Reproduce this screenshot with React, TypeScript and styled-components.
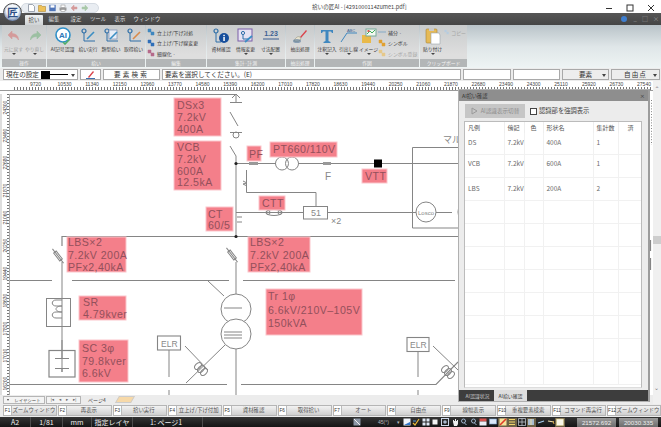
import React from "react";
import styled, { createGlobalStyle } from "styled-components";

const Global = createGlobalStyle`
  html, body { margin: 0; padding: 0; background: #fff; }
  * { box-sizing: border-box; }
  #root { width: 661px; height: 427px; }
`;
const JP = `"Noto Sans CJK JP", "Liberation Sans", sans-serif`;

const Root = styled.div`
  position: relative; width: 661px; height: 427px; overflow: hidden;
  display: flex; flex-direction: column; font-family: ${JP}; background: #f0f0f0;
`;
const TitleBar = styled.div`
  height: 13px; background: #fff; display: flex; align-items: center; position: relative;
  padding: 2px 0 0 21px;
`;
const Quick = styled.div`
  width: 78px; height: 10px; border-radius: 5px; background: #e9edf2; border: 1px solid #d5dbe2;
  display: flex; align-items: center; gap: 3px; padding-left: 6px;
`;
const TitleText = styled.div`
  position: absolute; left: 312px; top: 3px; font-size: 5.6px; line-height: 8px; color: #444; white-space: nowrap;
`;
const WinButtons = styled.div`
  position: absolute; right: 0; top: 0; height: 16px; display: flex; align-items: center;
`;
const WinBtn = styled.div`
  width: 21px; display: flex; justify-content: center; align-items: center; color: #333;
`;
const Logo = styled.div`
  position: absolute; left: 3px; top: 3px; width: 19px; height: 19px; border-radius: 50%;
  background: radial-gradient(circle at 50% 40%, #f4f7fb 0 45%, #6c82a8 75%, #3d4760 100%);
  border: 1px solid #4e4e4e; display: flex; align-items: center; justify-content: center;
  font-size: 11px; line-height: 1; font-weight: 700; color: #2f4f86; z-index: 3;
`;
const TabBar = styled.div`
  height: 12px; background: linear-gradient(#565656, #454545); display: flex; align-items: flex-end;
  padding-left: 25px; position: relative;
`;
const Tab = styled.div<{ $w: number; $active?: boolean }>`
  width: ${p => p.$w}px; height: ${p => (p.$active ? 10 : 12)}px; font-size: 5.4px; line-height: ${p => (p.$active ? 10 : 12)}px;
  text-align: center; color: ${p => (p.$active ? "#444" : "#ddd")};
  background: ${p => (p.$active ? "linear-gradient(#eef1f2,#cfd3d5)" : "transparent")};
  border-radius: 1px 1px 0 0;
`;
const TabRight = styled.div`
  position: absolute; right: 2px; top: 2px; display: flex; align-items: center; gap: 5px;
  color: #9a9a9a; font-size: 6px; line-height: 8px;
`;
const HelpDot = styled.span`
  width: 6px; height: 6px; border-radius: 50%; background: #3f7fd0; margin-right: 2px;
`;
const Ribbon = styled.div`
  height: 43px; display: flex; padding: 0 0 1px 2px; gap: 1px;
  background: linear-gradient(#b9c3c8, #dfe6e8 50%, #eef4f4);
`;
const Group = styled.div<{ $w: number }>`
  width: ${p => p.$w}px; display: flex; flex-direction: column;
  background: linear-gradient(#c8cbcc, #dedede 70%);
`;
const GroupBody = styled.div`
  flex: 1; display: flex; padding: 1px 1px 0; min-height: 0;
`;
const GroupLabel = styled.div`
  height: 8px; background: #b3b6b7; color: #f3f3f3; text-align: center; font-size: 4.8px; line-height: 8px;
`;
const Big = styled.div<{ $w: number; $off?: boolean }>`
  width: ${p => p.$w}px; display: flex; flex-direction: column; align-items: center; padding-top: 1px;
  font-size: 4.8px; line-height: 7px; white-space: nowrap; color: ${p => (p.$off ? "#9c9c9c" : "#3a3a3a")};
`;
const IconSlot = styled.div`
  height: 18px; display: flex; align-items: center; justify-content: center;
`;
const Caret = styled.div`
  width: 0; height: 0; border: 2px solid transparent; border-top: 2px solid #444; border-bottom: 0; margin-top: 1px;
`;
const Stack = styled.div<{ $w: number }>`
  width: ${p => p.$w}px; display: flex; flex-direction: column; justify-content: flex-start; padding-top: 1px;
`;
const Small = styled.div<{ $off?: boolean }>`
  height: 10.5px; display: flex; align-items: center; gap: 2px; white-space: nowrap;
  font-size: 4.9px; color: ${p => (p.$off ? "#a5a5a5" : "#3a3a3a")};
`;
const SettingsBar = styled.div`
  height: 13px; background: #ececec; display: flex; padding: 1px 1px 1px 3px; gap: 2px; font-size: 6.6px; color: #333;
`;
const Cell = styled.div<{ $w?: number; $center?: boolean; $flat?: boolean; $spaced?: number }>`
  ${p => (p.$w ? `width:${p.$w}px;` : "flex:1;")}
  height: 11px; background: ${p => (p.$flat ? "#ededed" : "#fff")}; border: 1px solid #a9a9a9; display: flex; align-items: center;
  justify-content: ${p => (p.$center ? "center" : "flex-start")}; padding: 0 2px; line-height: 9px; white-space: nowrap; position: relative;
  letter-spacing: ${p => p.$spaced ?? 0}px;
`;
const Swatch = styled.span`
  width: 9px; height: 8px; background: #000; margin-left: 2px;
`;
const LineSample = styled.span`
  width: 18px; height: 1px; background: #000;
`;
const DropArrow = styled.span`
  position: absolute; right: 2px; top: 4px; width: 0; height: 0; border: 2px solid transparent; border-top: 3px solid #444; border-bottom: 0;
`;
const Workspace = styled.div`
  position: relative; height: 323px; display: flex; background: #f0f0f0;
`;
const DrawColumn = styled.div`
  width: 653px; display: flex; flex-direction: column;
`;
const TopRuler = styled.div`
  height: 13px; display: flex; padding-left: 29px; overflow: hidden; background-color: #fff;
  background-image:
    linear-gradient(#9a9a9a, #9a9a9a),
    repeating-linear-gradient(90deg, #777 0 1px, transparent 1px 3px);
  background-size: 100% 1px, 100% 3px; background-repeat: no-repeat; background-position: 0 9px, 14px 6px;
`;
const TopLabel = styled.div`
  width: 27.6px; flex: none; height: 6px; font-family: "Liberation Sans", sans-serif; font-size: 5px; line-height: 6px; color: #444;
  padding-left: 1px;
`;
const DrawRow = styled.div`
  height: 301px; display: flex;
`;
const LeftRuler = styled.div`
  width: 10px; display: flex; flex-direction: column; overflow: hidden; padding-top: 7px; background-color: #fff;
  background-image: repeating-linear-gradient(0deg, #777 0 1px, transparent 1px 3px);
  background-size: 3px 100%; background-repeat: no-repeat; background-position: 5px 0;
  border-left: 2px solid #dedede; border-right: 1px solid #aaa;
`;
const LeftLabel = styled.div`
  height: 27.6px; flex: none; writing-mode: vertical-rl; transform: rotate(180deg); text-align: right;
  font-family: "Liberation Sans", sans-serif; font-size: 5px; line-height: 6px; color: #444; width: 6px;
`;
const Canvas = styled.div`
  width: 643px; height: 301px; background: #fff;
  svg { display: block; }
`;
const LayerTabs = styled.div`
  height: 9px; display: flex; align-items: center; gap: 1px; padding: 0 0 0 3px; background: #ececec;
  font-size: 5px; color: #444; line-height: 8px;
`;
const LayerBox = styled.div<{ $w: number }>`
  width: ${p => p.$w}px; height: 8px; border: 1px solid #b5b5b5; background: #f4f4f4; display: flex; align-items: center; justify-content: space-around;
  line-height: 6px; font-size: 4.4px; white-space: nowrap; padding: 0 1px;
`;
const TinyCaret = styled.span`
  width: 0; height: 0; border: 1.5px solid transparent; border-top: 2px solid #444; border-bottom: 0;
`;
const NavGlyph = styled.span`
  font-family: "DejaVu Sans", sans-serif; font-size: 4.4px; color: #666;
`;
const PageTab = styled.div`
  margin-left: 6px; width: 26px; white-space: nowrap;
`;
const SheetStub = styled.div`
  width: 16px; height: 7px; margin-left: 2px; background: #f7d9a8; border: 1px solid #ccc; transform: skewX(-30deg);
`;
const VScroll = styled.div`
  width: 8px; background: #f0f0f0; display: flex; flex-direction: column; align-items: center; padding-top: 5px; position: relative;
`;
const Thumb = styled.div`
  position: absolute; left: 0; top: 155px; width: 8px; height: 8px; background: #cdcdcd;
`;
const ScrollGlyph = styled.div`
  font-size: 6px; line-height: 6px; color: #777; font-family: "DejaVu Sans", sans-serif;
`;
const ScrollDown = styled(ScrollGlyph)`
  position: absolute; bottom: 13px; left: 1px;
`;
const Panel = styled.div`
  position: absolute; left: 458px; top: 8px; width: 192px; height: 313px; background: #ececec;
  border: 1px solid #b0b0b0; border-right: 2px solid #9c9c9c; display: flex; flex-direction: column; z-index: 2;
`;
const PanelTitle = styled.div`
  height: 11px; background: #8e8e8e; color: #333; font-size: 5.2px; line-height: 11px; padding: 0 3px; display: flex; justify-content: space-between; flex: none;
`;
const PanelTools = styled.div`
  height: 20px; display: flex; align-items: center; padding: 0 0 0 6px; flex: none;
`;
const ToolButton = styled.div`
  width: 60px; height: 14px; background: #c6c6c6; color: #8d8d8d; font-size: 5.6px; display: flex; align-items: center; justify-content: center; gap: 3px; line-height: 8px; white-space: nowrap;
`;
const CheckLabel = styled.label`
  margin-left: 5px; display: flex; align-items: center; gap: 2px; font-size: 6.3px; color: #444; white-space: nowrap; line-height: 8px;
`;
const CheckBox = styled.span`
  width: 7px; height: 7px; background: #fff; border: 1px solid #444; display: block;
`;
const TableWrap = styled.div`
  margin: 0 6px 0 5px; flex: 1; background: #fff; border: 1px solid #bbb; border-bottom-color: #ddd; overflow: hidden; min-height: 0;
`;
const Table = styled.table`
  border-collapse: collapse; table-layout: fixed; width: 178px; font-size: 6.5px; color: #6a6a6a;
  font-family: "Noto Sans CJK JP", "Liberation Sans", sans-serif;
`;
const Th = styled.th<{ $w: number; $mid?: boolean }>`
  width: ${p => p.$w}px; height: 11px; font-weight: 400; text-align: ${p => (p.$mid ? "center" : "left")};
  padding: 0 0 0 ${p => (p.$mid ? 0 : 3)}px; border-right: 1px solid #eee; color: #555; line-height: 8px; font-size: 6px;
`;
const Td = styled.td<{ $h: number; $lift: number }>`
  height: ${p => p.$h}px; padding: 0 0 ${p => p.$lift}px 3px; border-right: 1px solid #f1f1f1; border-bottom: 1px solid #f1f1f1; line-height: 8px;
`;
const PanelFoot = styled.div`
  height: 11px; margin-top: 2px; background: #3d3d3d; display: flex; flex: none; padding-left: 2px;
`;
const FootTab = styled.div<{ $active?: boolean }>`
  width: 33px; font-size: 4.9px; line-height: 11px; text-align: center; white-space: nowrap;
  color: ${p => (p.$active ? "#333" : "#c5c5c5")}; background: ${p => (p.$active ? "#dedede" : "transparent")};
`;
const FKeys = styled.div`
  height: 13px; display: grid; grid-template-columns: repeat(12, 1fr); gap: 1px; padding: 1px 0 1px 3px; background: #ececec;
`;
const FKey = styled.div`
  display: flex; height: 11px; border: 1px solid #b5b5b5; background: linear-gradient(#f2f2f2, #cfcfcf); overflow: hidden; min-width: 0;
`;
const FCap = styled.span`
  flex: none; width: 8px; background: #fff; border-right: 1px solid #bbb; font-family: "Liberation Sans", sans-serif; font-size: 4.6px; line-height: 9px; text-align: center; color: #333;
`;
const FText = styled.span`
  flex: 1; text-align: center; font-size: 5.4px; line-height: 9px; color: #555; white-space: nowrap; overflow: hidden;
`;
const Status = styled.div`
  height: 10px; background: linear-gradient(#343434, #151515); display: flex; align-items: center; color: #eee; font-size: 7px; line-height: 10px; position: relative;
`;
const StatusText = styled.span<{ $w: number; $left?: number }>`
  width: ${p => p.$w}px; flex: none; white-space: nowrap; text-align: ${p => (p.$left ? "left" : "center")};
  padding-left: ${p => p.$left ?? 0}px; height: 10px; border-right: 1px solid #4c4c4c;
`;
const StatusTools = styled.div`
  margin-left: auto; display: flex; align-items: center; padding-right: 3px;
`;
const StatusAngle = styled.span`
  width: 40px; display: flex; justify-content: flex-end; gap: 8px; padding-right: 2px; font-size: 5px; color: #bbb; font-family: "Liberation Sans", sans-serif;
`;
const StatusCell = styled.span<{ $on?: boolean }>`
  width: 9.6px; height: 9px; display: flex; align-items: center; justify-content: center;
  background: ${p => (p.$on ? "#6d6246" : "transparent")};
`;
const Coord = styled.span<{ $gap: number }>`
  width: 39px; height: 9px; background: linear-gradient(#9a9a9a, #6d6d6d); color: #eee; font-size: 6.2px; line-height: 9px; text-align: center;
  font-family: "Liberation Sans", sans-serif; margin-left: ${p => p.$gap}px;
`;

/* --- ribbon drawings --- */
const Undo = ({ flip, c }: { flip?: boolean; c: string }) => (
  <svg width="14" height="12" viewBox="0 0 14 12" style={flip ? { transform: "scaleX(-1)" } : undefined}>
    <path d="M5 1 1 5l4 4V6.5c3 0 5 .8 6.5 3.5C11.5 6 9 3.6 5 3.5z" fill={c} stroke={c} strokeWidth=".6" />
  </svg>
);
const AiIcon = () => (
  <svg width="18" height="18" viewBox="0 0 18 18">
    <circle cx="9" cy="8" r="7" fill="#fff" stroke="#2f8fc8" strokeWidth="1.6" />
    <text x="9" y="11" textAnchor="middle" fontSize="8" fontWeight="700" fill="#2d78b8" fontFamily="Liberation Sans">AI</text>
    <path d="M9 15l2 2 5-5" fill="none" stroke="#4fae6a" strokeWidth="1.6" />
  </svg>
);
const Node = ({ accent, box }: { accent: string; box?: boolean }) => (
  <svg width="16" height="16" viewBox="0 0 16 16">
    <circle cx="4" cy="3" r="2" fill="none" stroke="#2f6fa8" strokeWidth="1.2" />
    <path d="M4 5v8h11" fill="none" stroke="#2f6fa8" strokeWidth="1" />
    {box && <rect x="6" y="2" width="8" height="9" fill="#e8eef8" stroke="#7b8fb5" strokeWidth=".7" />}
    <path d="M7 11l7-7" stroke={accent} strokeWidth="1.6" />
  </svg>
);
const Info = () => (
  <svg width="18" height="16" viewBox="0 0 18 16">
    <circle cx="4" cy="3" r="2" fill="none" stroke="#2f6fa8" strokeWidth="1.2" />
    <path d="M4 5v9h5" fill="none" stroke="#2f6fa8" />
    <circle cx="12" cy="10" r="5" fill="#174f9c" />
    <rect x="11.3" y="9" width="1.5" height="4" fill="#fff" />
    <rect x="11.3" y="6.8" width="1.5" height="1.4" fill="#fff" />
  </svg>
);
const Change = () => (
  <svg width="17" height="17" viewBox="0 0 17 17">
    <rect x="1" y="1" width="14" height="12" fill="#e6e2f2" stroke="#7a5ea8" />
    <circle cx="6" cy="5" r="1.6" fill="none" stroke="#2f6fa8" />
    <path d="M6 7v4h6" fill="none" stroke="#2f6fa8" />
    <path d="M8 14l7-6" stroke="#3b8ec4" strokeWidth="1.8" />
  </svg>
);
const Dim = () => (
  <svg width="18" height="14" viewBox="0 0 18 14">
    <text x="9" y="7" textAnchor="middle" fontSize="7" fontWeight="700" fill="#3c5f92" fontFamily="Liberation Sans">1.23</text>
    <path d="M1 10h16" stroke="#3c5f92" />
  </svg>
);
const Brush = () => (
  <svg width="16" height="16" viewBox="0 0 16 16">
    <path d="M8 9 14 2l1 1-6 7z" fill="#d9424a" />
    <path d="M2 13c2-4 4-5 6-4l1 2c-1 2-4 3-7 2z" fill="#e8e2cf" stroke="#8b8b6e" strokeWidth=".5" />
    <ellipse cx="5" cy="13" rx="4" ry="2" fill="#55789b" opacity=".6" />
  </svg>
);
const TIcon = () => (
  <svg width="16" height="16" viewBox="0 0 16 16">
    <path d="M2 2h12v3h-1l-1-1.5H9.5V13l2 1v1h-7v-1l2-1V3.5H4L3 5H2z" fill="#3f87bf" />
  </svg>
);
const Leader = () => (
  <svg width="18" height="16" viewBox="0 0 18 16">
    <path d="M1 14 7 5h10" fill="none" stroke="#3f87bf" />
    <text x="11" y="4" textAnchor="middle" fontSize="4" fill="#3c5f92" fontFamily="Liberation Sans">ABC</text>
  </svg>
);
const ImageIcon = () => (
  <svg width="16" height="16" viewBox="0 0 16 16">
    <path d="M1 7h9v8H1z" fill="#e9b949" />
    <rect x="5" y="1" width="10" height="7" fill="#f4f9f2" stroke="#7a9" />
    <path d="M6 6l3-3 2 2 3-3" stroke="#3fae5a" fill="none" />
    <rect x="6.5" y="2" width="2" height="2" fill="#e25a5a" />
  </svg>
);
const Paste = () => (
  <svg width="16" height="18" viewBox="0 0 16 18">
    <rect x="1" y="2" width="11" height="14" rx="1" fill="#e6ba57" stroke="#a98432" strokeWidth=".6" />
    <rect x="4" y="1" width="5" height="3" fill="#c9c9c9" />
    <path d="M6 6h8l1 2v9H6z" fill="#fff" stroke="#9aa4ad" strokeWidth=".6" />
  </svg>
);
const Mini = ({ c, d }: { c: string; d?: string }) => (
  <svg width="8" height="8" viewBox="0 0 8 8">
    <path d={d ?? "M1 1h3v3H1zM4 4h3v3H4z"} fill={c} stroke={c} strokeWidth=".5" />
  </svg>
);
const QDoc = () => (
  <svg width="7" height="8" viewBox="0 0 7 8"><path d="M.5.5h4l2 2v5h-6z" fill="#fff" stroke="#7a8494" strokeWidth=".7" /></svg>
);
const QFolder = () => (
  <svg width="8" height="8" viewBox="0 0 8 8"><path d="M.5 1.5h3l1 1h3v5h-7z" fill="#eec25a" stroke="#b08a34" strokeWidth=".6" /></svg>
);
const QSave = () => (
  <svg width="7" height="8" viewBox="0 0 7 8"><rect x=".3" y=".8" width="6.4" height="6.4" fill="#4f74b8" /><rect x="1.5" y="1.2" width="4" height="2.4" fill="#fff" /></svg>
);
const QPrint = () => (
  <svg width="8" height="8" viewBox="0 0 8 8"><rect x="2" y="1" width="4" height="2.5" fill="#fff" stroke="#888" strokeWidth=".5" /><rect x=".5" y="3.5" width="7" height="3" fill="#9a9a9a" /><rect x="2" y="5.5" width="4" height="2" fill="#fff" stroke="#888" strokeWidth=".5" /></svg>
);

const Wide = ({ label, off, icon, caret, w }: { label: string; off?: boolean; icon: React.ReactNode; caret?: boolean; w: number }) => (
  <Big $w={w} $off={off}>
    <IconSlot>{icon}</IconSlot>
    <span>{label}</span>
    {caret && <Caret />}
  </Big>
);

/* --- status bar drawings --- */
const statusIcons: { on?: boolean; el: React.ReactNode }[] = [
  { el: <svg width="8" height="8"><rect x=".5" y=".5" width="7" height="7" fill="#f0f4fa" /><path d="M1 7h6V4z" fill="#2f74c8" /></svg> },
  { el: <svg width="8" height="8"><path d="M1 5l2 2 4-6" fill="none" stroke="#e8b93a" strokeWidth="1.2" /><path d="M1 3h3" stroke="#4f9ad8" /></svg> },
  { el: <svg width="8" height="8"><path d="M.5.5h3v3h-3zM4.5.5h3v3h-3zM.5 4.5h3v3h-3zM4.5 4.5h3v3h-3z" fill="#dfe8f4" /></svg> },
  { el: <svg width="8" height="8"><rect x="1.5" y="1.5" width="5" height="5" fill="#f4f4f4" /></svg> },
  { el: <svg width="8" height="8"><rect x=".5" y=".5" width="7" height="7" fill="none" stroke="#cbd6e6" /><circle cx="4" cy="4" r="1.8" fill="#aab8cc" /></svg> },
  { el: <svg width="8" height="8"><path d="M2 4V2h1v1h1V1h1v2h1V2h1v4l-1 2H3z" fill="#eee" /></svg> },
  { el: <svg width="8" height="8"><circle cx="3.5" cy="3" r="2" fill="none" stroke="#9fb4cc" /><path d="M4.5 5l2 2" stroke="#9fb4cc" /></svg> },
  { el: <svg width="8" height="8"><circle cx="3.5" cy="3" r="2" fill="none" stroke="#9fb4cc" /><path d="M4.5 5l2 2" stroke="#9fb4cc" /></svg> },
  { el: <svg width="8" height="8"><rect x=".5" y=".5" width="7" height="3" fill="#d8534f" /><rect x=".5" y="3.5" width="7" height="4" fill="#e8eef6" /></svg> },
  { el: <svg width="8" height="8"><rect x=".5" y="1" width="7" height="5" fill="#dbe8f8" stroke="#7aa0cc" strokeWidth=".6" /></svg> },
  { on: true, el: <svg width="8" height="8"><rect x=".5" y=".5" width="7" height="7" fill="#f6e29a" /><path d="M1 7l6-6" stroke="#e03a28" strokeWidth="1.6" /></svg> },
  { on: true, el: <svg width="8" height="8"><path d="M1 1.5h6M1 4h6M1 6.5h6" stroke="#f2d56a" strokeWidth="1.2" /></svg> },
  { el: <svg width="8" height="8"><path d="M.5.5h7v7h-7zM.5 4h7M4 .5v7" fill="none" stroke="#cfd6e0" strokeWidth=".7" /></svg> },
  { on: true, el: <svg width="8" height="8"><rect x="1" y="1" width="6" height="6" fill="#a9bcd0" /><path d="M4 1v6" stroke="#e8d9a0" /></svg> },
  { el: <svg width="8" height="8"><path d="M1 5l6-2" stroke="#a8d0f0" strokeWidth="1.2" /></svg> },
  { el: <svg width="8" height="8"><path d="M1 3l6 1" stroke="#f2e2b0" strokeWidth="1.2" /><path d="M6 3l1 3" stroke="#d0a040" /></svg> },
  { on: true, el: <svg width="8" height="8"><rect x=".5" y="1" width="7" height="6.5" fill="#f8f6e8" stroke="#d8c88a" strokeWidth=".6" /></svg> },
];

/* --- diagram --- */
type Lbl = { x: number; y: number; w: number; h: number; lines: string[]; first: number; step: number; pad?: number };
const labels: Lbl[] = [
  { x: 174, y: 98, w: 47, h: 38, lines: ["DSx3", "7.2kV", "400A"], first: 109, step: 11.8 },
  { x: 174, y: 141, w: 47, h: 49, lines: ["VCB", "7.2kV", "600A", "12.5kA"], first: 151, step: 11.8 },
  { x: 206, y: 207, w: 27, h: 24, lines: ["CT", "60/5"], first: 218, step: 11, pad: 2 },
  { x: 247, y: 146, w: 14, h: 15, lines: ["PF"], first: 158, step: 0, pad: 2 },
  { x: 270, y: 142, w: 67, h: 15, lines: ["PT660/110V"], first: 153, step: 0, pad: 3 },
  { x: 362, y: 169, w: 25, h: 14, lines: ["VTT"], first: 180, step: 0, pad: 3 },
  { x: 259, y: 196, w: 26, h: 14, lines: ["CTT"], first: 207, step: 0, pad: 3 },
  { x: 67, y: 237, w: 59, h: 35, lines: ["LBS×2", "7.2kV 200A", "PFx2,40kA"], first: 246, step: 12.5, pad: 1 },
  { x: 248, y: 237, w: 62, h: 35, lines: ["LBS×2", "7.2kV 200A", "PFx2,40kA"], first: 246, step: 12.5, pad: 2 },
  { x: 79, y: 296, w: 47, h: 24, lines: ["SR", "4.79kver"], first: 306, step: 11.5, pad: 4 },
  { x: 79, y: 340, w: 49, h: 42, lines: ["SC 3φ", "79.8kver", "6.6kV"], first: 352, step: 12.5, pad: 3 },
  { x: 266, y: 289, w: 96, h: 46, lines: ["Tr 1φ", "6.6kV/210V–105V", "150kVA"], first: 300, step: 13.5, pad: 2 },
];
const Lines = styled.g`
  fill: none; stroke: #858585; stroke-width: 1;
`;
const LabelBg = styled.rect`
  fill: #f47f8a; stroke: #fbc6cb; stroke-width: 1;
`;
const LabelText = styled.text`
  fill: #93505b; font-family: "Liberation Sans", sans-serif; font-size: 10.6px; letter-spacing: .45px;
`;
const PlainText = styled.text<{ $size?: number }>`
  fill: #888; font-family: "Liberation Sans", ${JP}; font-size: ${p => p.$size ?? 9}px;
`;
const Fuse = ({ x, y }: { x: number; y: number }) => (
  <g transform={`translate(${x} ${y}) rotate(52)`}>
    <rect x="-5" y="-1.6" width="10" height="3.2" fill="#fff" />
    <path d="M-9 0H9" />
  </g>
);
const CtCoil = ({ x, y }: { x: number; y: number }) => (
  <g>
    <ellipse cx={x} cy={y - 3} rx="4" ry="2.6" transform={`rotate(-45 ${x} ${y - 3})`} />
    <ellipse cx={x + 3} cy={y} rx="4" ry="2.6" transform={`rotate(-45 ${x + 3} ${y})`} />
    <ellipse cx={x + 6} cy={y + 3} rx="4" ry="2.6" transform={`rotate(-45 ${x + 6} ${y + 3})`} />
  </g>
);

const Diagram = () => (
  <svg width="643" height="301" viewBox="10 94 643 301">
    <Lines>
      <path d="M10 94.5H236" strokeWidth="1.2" />
      <path d="M236 94V102M230 102.5H242M232 98l4-4 4 4" />
      <path d="M230 112 238 126M230 132.5H242M230 146 236 156V236" />
      <circle cx="236" cy="135" r="3" />
      <path d="M236 163.5H249M258 163.5H276M298 163.5H323M331 163.5H458" />
      <circle cx="282" cy="163.5" r="6.5" />
      <circle cx="292" cy="163.5" r="6.5" />
      <path d="M246.5 170V192.5H316V206" />
      <path d="M243 181l4 2-4 1 4 2" />
      <path d="M236 212.5H303M328 212.5H416M436 212.5H452" />
      <ellipse cx="274" cy="212.5" rx="8" ry="3" />
      <circle cx="268" cy="212.5" r="2" />
      <circle cx="280" cy="212.5" r="2" />
      <path d="M237 217h5M237 222h5" />
      <rect x="303.5" y="206.5" width="24" height="12.5" fill="#fff" />
      <path d="M458 147.5H412.5V228H458" />
      <circle cx="426" cy="212" r="10" fill="#fff" />
      <path d="M466 202a10 10 0 0 0 -8 10 10 10 0 0 0 8 10" />
      <path d="M62 246V236.5H458" strokeWidth="1.2" />
      <path d="M10 280.5H52M72 280.5H229M243 280.5H455" strokeWidth="1.1" />
      <path d="M62 262V372" />
      <Fuse x={58} y={256} />
      <Fuse x={232} y={255} />
      <path d="M236 262V294M236 349V395" />
      <rect x="46.5" y="298.5" width="24" height="28" fill="#fff" />
      <path d="M62 300h-6c-5 0-5 6 0 6h6c-8 0-8 6 0 6h-6c-5 0-5 6 0 6h6M62 298V326" fill="none" />
      <rect x="49" y="350.5" width="26" height="26.5" strokeWidth="1.2" />
      <path d="M62 340V358M55 358.5H69M55 368.5H69M62 368.5V372" />
      <path d="M10 384.5H227M241 384.5H436L458 362" strokeWidth="1.1" />
      <path d="M208 281 224 296" />
      <circle cx="236" cy="309" r="15" fill="#fff" />
      <circle cx="236" cy="334" r="15" fill="#fff" />
      <path d="M224 308h18M224 332h18M224 335h18M224 338h18" />
      <rect x="157.5" y="336" width="23" height="14" strokeWidth="1.1" />
      <path d="M169 350V377M169 390V395M185 346l23 24M186 383l39-38" />
      <CtCoil x={198} y={369} />
      <rect x="407" y="337.5" width="22" height="14" strokeWidth="1.1" />
      <path d="M418 351V377M418 390V395M433 346l25 24" />
      <CtCoil x={445} y={372} />
      <path d="M651.5 100V145" strokeDasharray="1 1.8" />
      <path d="M650.5 240V251M650.5 258V270" strokeWidth="1.2" />
    </Lines>
    <rect x="374" y="159.5" width="8" height="8" fill="#000" />
    <circle cx="236" cy="163.5" r="1.6" fill="#222" />
    <circle cx="236" cy="236.5" r="1.6" fill="#222" />
    <rect x="249" y="162" width="9" height="3" fill="#999" />
    <rect x="323" y="162" width="8" height="3" fill="#999" />
    <PlainText x="325" y="180" $size={10}>F</PlainText>
    <PlainText x="331" y="224">×2</PlainText>
    <PlainText x="443" y="143">マル</PlainText>
    <PlainText x="311" y="216">51</PlainText>
    <PlainText x="161" y="347" $size={8.5}>ELR</PlainText>
    <PlainText x="410" y="348" $size={8.5}>ELR</PlainText>
    <PlainText x="418" y="215" $size={6}>Losco</PlainText>
    {labels.map(l => (
      <g key={l.x + "-" + l.y}>
        <LabelBg x={l.x} y={l.y} width={l.w} height={l.h} />
        {l.lines.map((t, i) => (
          <LabelText key={t} x={l.x + (l.pad ?? 3)} y={l.first + i * l.step}>{t}</LabelText>
        ))}
      </g>
    ))}
  </svg>
);

const topNums = [9720, 10530, 11340, 12150, 12960, 13770, 14580, 15390, 16200, 17010, 17820, 18630, 19440, 20250, 21060, 21870, 22680, 23490, 24300, 25110, 25920, 26730, 27540];
const leftNums = [24300, 23490, 22680, 21870, 21060, 20250, 19440, 18630, 17820, 17010, 16200];
const rows = [
  ["DS", "7.2kV", "", "400A", "1", ""],
  ["VCB", "7.2kV", "", "600A", "1", ""],
  ["LBS", "7.2kV", "", "200A", "2", ""],
  ...Array.from({ length: 8 }, () => ["", "", "", "", "", ""]),
];
const rowLift = [2, 6, 2];
const fkeys = ["ズームウィンドウ", "再表示", "拾い実行", "立上げ/下げ付加", "資材確認", "取得拾い", "オート", "自由点", "線幅表示", "重複要素検索", "コマンド再実行", "ズームウィンドウ"];
const colWidths = [39, 20, 19, 50, 25, 25];
const tabs: [string, number][] = [["編集", 22], ["設定", 22], ["ツール", 22], ["表示", 22], ["ウィンドウ", 32]];

export default function App() {
  return (
    <Root>
      <Global />
      <Logo>匠</Logo>
      <TitleBar>
        <Quick>
          <QDoc />
          <QFolder />
          <QSave />
          <QPrint />
          <Mini c="#d59a9a" d="M1 4 4 1v2h3v2H4v2z" />
          <Mini c="#a8c8a8" d="M7 4 4 1v2H1v2h3v2z" />
        </Quick>
        <TitleText>拾いの匠AI - [4291000114zume1.pdf]</TitleText>
        <WinButtons>
          <WinBtn><svg width="8" height="8"><path d="M1 4.5h6" stroke="#333" /></svg></WinBtn>
          <WinBtn><svg width="8" height="8"><rect x="1" y="1" width="6" height="6" fill="none" stroke="#333" /></svg></WinBtn>
          <WinBtn><svg width="8" height="8"><path d="M1 1l6 6M7 1l-6 6" stroke="#333" /></svg></WinBtn>
        </WinButtons>
      </TitleBar>
      <TabBar>
        <Tab $w={18} $active>拾い</Tab>
        {tabs.map(([t, w]) => <Tab key={t} $w={w}>{t}</Tab>)}
        <TabRight><HelpDot />_<span>□</span><span>×</span></TabRight>
      </TabBar>
      <Ribbon>
        <Group $w={44}>
          <GroupBody>
            <Wide w={21} off label="元に戻す" caret icon={<Undo c="#d49a9a" />} />
            <Wide w={21} off label="やり直し" caret icon={<Undo flip c="#9cc0a2" />} />
          </GroupBody>
          <GroupLabel>操作</GroupLabel>
        </Group>
        <Group $w={98}>
          <GroupBody>
            <Wide w={29} label="AI記号認識" icon={<AiIcon />} />
            <Wide w={22} label="拾い実行" icon={<Node accent="#3b8ec4" />} />
            <Wide w={24} label="類型拾い" icon={<Node accent="#3b8ec4" box />} />
            <Wide w={21} label="取得拾い" icon={<Node accent="#d98a4a" />} />
          </GroupBody>
          <GroupLabel>拾い</GroupLabel>
        </Group>
        <Group $w={60}>
          <GroupBody>
            <Stack $w={58}>
              <Small><Mini c="#3f87bf" />立上げ/下げ対処</Small>
              <Small><Mini c="#2f6fb8" />立上げ/下げ線変更</Small>
              <Small><Mini c="#b56a8a" />細線化 ·</Small>
            </Stack>
          </GroupBody>
          <GroupLabel>編集</GroupLabel>
        </Group>
        <Group $w={78}>
          <GroupBody>
            <Wide w={26} label="資材確認" icon={<Info />} />
            <Wide w={23} label="情報変更" caret icon={<Change />} />
            <Wide w={27} label="寸法配置" caret icon={<Dim />} />
          </GroupBody>
          <GroupLabel>集計·計測</GroupLabel>
        </Group>
        <Group $w={28}>
          <GroupBody>
            <Wide w={26} label="抽出処理" icon={<Brush />} />
          </GroupBody>
          <GroupLabel>抽出処理</GroupLabel>
        </Group>
        <Group $w={104}>
          <GroupBody>
            <Wide w={22} label="注釈記入" caret icon={<TIcon />} />
            <Wide w={21} label="引出し線" caret icon={<Leader />} />
            <Wide w={19} label="イメージ" caret icon={<ImageIcon />} />
            <Stack $w={40}>
              <Small><Mini c="#3f87bf" d="M0 4h8" />補分 ·</Small>
              <Small><Mini c="#e0a030" />シンボル</Small>
              <Small $off><Mini c="#e6c88a" />シンボル登録</Small>
            </Stack>
          </GroupBody>
          <GroupLabel>作図</GroupLabel>
        </Group>
        <Group $w={47}>
          <GroupBody>
            <Wide w={23} label="貼り付け" caret icon={<Paste />} />
            <Stack $w={22}>
              <Small $off><Mini c="#b8cde0" />コピー</Small>
            </Stack>
          </GroupBody>
          <GroupLabel>クリップボード</GroupLabel>
        </Group>
      </Ribbon>
      <SettingsBar>
        <Cell $w={75}>現在の設定<Swatch /><LineSample /><DropArrow /></Cell>
        <Cell $w={21} $center>
          <svg width="9" height="9" viewBox="0 0 9 9"><path d="M2 7 7 1l1 1-5 6z" fill="#d9424a" /><path d="M0 8.5h9" stroke="#3f6fb0" /></svg>
        </Cell>
        <Cell $w={57} $center $spaced={2.2}>要素検索</Cell>
        <Cell>要素を選択してください。(E)</Cell>
        <Cell $w={48} />
        <Cell $w={47} />
        <Cell $w={47} $center $flat>要素<DropArrow /></Cell>
        <Cell $w={49} $center $flat $spaced={1}>自由点<DropArrow /></Cell>
      </SettingsBar>
      <Workspace>
        <DrawColumn>
          <TopRuler>{topNums.map(n => <TopLabel key={n}>{n}</TopLabel>)}</TopRuler>
          <DrawRow>
            <LeftRuler>{leftNums.map(n => <LeftLabel key={n}>{n}</LeftLabel>)}</LeftRuler>
            <Canvas><Diagram /></Canvas>
          </DrawRow>
          <LayerTabs>
            <LayerBox $w={42}><TinyCaret />レイヤシート</LayerBox>
            <LayerBox $w={35}>
              <NavGlyph>|◂</NavGlyph><NavGlyph>◂</NavGlyph><NavGlyph>▸</NavGlyph><NavGlyph>▸|</NavGlyph>
            </LayerBox>
            <PageTab>ページ4</PageTab>
            <SheetStub />
          </LayerTabs>
        </DrawColumn>
        <VScroll>
          <ScrollGlyph>⌃</ScrollGlyph>
          <Thumb />
          <ScrollDown>⌄</ScrollDown>
        </VScroll>
        <Panel>
          <PanelTitle><span>AI拾い確認</span><span>×</span></PanelTitle>
          <PanelTools>
            <ToolButton>
              <svg width="7" height="8"><path d="M1 1v6l5-3z" fill="none" stroke="#9a9a9a" /></svg>
              AI認識表示切替
            </ToolButton>
            <CheckLabel><CheckBox />認識部を強調表示</CheckLabel>
          </PanelTools>
          <TableWrap>
            <Table>
              <thead>
                <tr>
                  {["凡例", "傍記", "色", "形状名", "集計数", "済"].map((h, i) => (
                    <Th key={h} $w={colWidths[i]} $mid={h === "色" || h === "済"}>{h}</Th>
                  ))}
                </tr>
              </thead>
              <tbody>
                {rows.map((r, i) => (
                  <tr key={i}>
                    {r.map((c, j) => <Td key={j} $h={i === 0 ? 21 : 23} $lift={rowLift[i] ?? 0}>{c}</Td>)}
                  </tr>
                ))}
              </tbody>
            </Table>
          </TableWrap>
          <PanelFoot>
            <FootTab>AI認識状況</FootTab>
            <FootTab $active>AI拾い確認</FootTab>
          </PanelFoot>
        </Panel>
      </Workspace>
      <FKeys>
        {fkeys.map((t, i) => (
          <FKey key={i}><FCap>F{i + 1}</FCap><FText>{t}</FText></FKey>
        ))}
      </FKeys>
      <Status>
        <StatusText $w={31}>A2</StatusText>
        <StatusText $w={32}>1/81</StatusText>
        <StatusText $w={29}>mm</StatusText>
        <StatusText $w={41}>指定レイヤ</StatusText>
        <StatusText $w={70} $left={17}>1: ページ1</StatusText>
        <StatusTools>
          <StatusCell>
            <svg width="8" height="8"><rect x=".5" y=".5" width="7" height="7" fill="#8c97a6" /><path d="M1 1l6 6" stroke="#eee" /></svg>
          </StatusCell>
          <StatusAngle><span>45(°)</span><span>▾</span></StatusAngle>
          {statusIcons.map((s, i) => <StatusCell key={i} $on={s.on}>{s.el}</StatusCell>)}
          <Coord $gap={12}>21572.692</Coord>
          <Coord $gap={3}>20030.335</Coord>
        </StatusTools>
      </Status>
    </Root>
  );
}
